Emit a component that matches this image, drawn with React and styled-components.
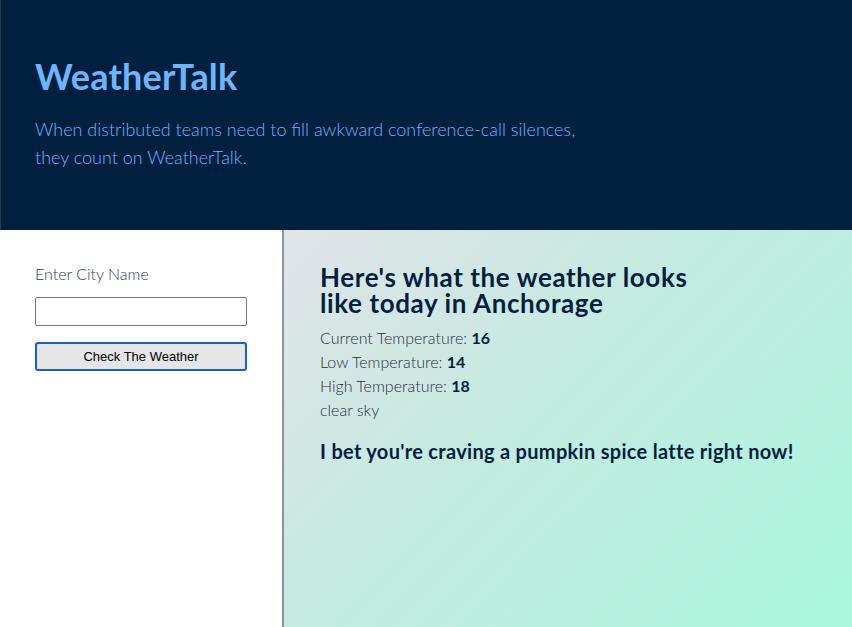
import React from "react";
import styled, { createGlobalStyle } from "styled-components";

const Global = createGlobalStyle`
  html, body { margin: 0; padding: 0; height: 100%; }
  body { font-family: Lato, "Open Sans", sans-serif; }
  #root { height: 100%; }
`;

const Page = styled.div`
  display: flex;
  flex-direction: column;
  min-height: 100vh;
`;

const Header = styled.header`
  background: #012040;
  height: 230px;
  box-sizing: border-box;
  padding: 56px 34px 0;
  border-left: 1px solid #1d3955;
`;

const Title = styled.h1`
  margin: 0;
  color: #6cb6ff;
  font-family: Lato, sans-serif;
  font-weight: 700;
  font-size: 36px;
  line-height: 40px;
  letter-spacing: 0.2px;
`;

const Tagline = styled.p`
  margin: 19px 0 0;
  color: #6cb6ff;
  font-family: Lato, sans-serif;
  font-weight: 300;
  font-size: 18px;
  line-height: 28px;
  max-width: 560px;
`;

const Main = styled.main`
  flex: 1;
  display: grid;
  grid-template-columns: 284px 1fr;
`;

const Sidebar = styled.aside`
  background: #fff;
  border-right: 2px solid #8792a2;
  padding: 34px 35px;
  display: flex;
  flex-direction: column;
  align-items: flex-start;
`;

const Label = styled.label`
  font-family: Lato, sans-serif;
  font-weight: 300;
  font-size: 16px;
  color: #2f3b4b;
  line-height: 20px;
`;

const Input = styled.input`
  margin-top: 13px;
  width: 212px;
  height: 29px;
  box-sizing: border-box;
  border: 1px solid #767676;
  border-radius: 2px;
  padding: 2px 6px;
  font-size: 13px;
`;

const Button = styled.button`
  margin-top: 16px;
  width: 212px;
  height: 29px;
  box-sizing: border-box;
  background: #e5e5e5;
  border: 2px solid #1a5fd0;
  border-radius: 3px;
  font-family: "Liberation Sans", Arial, sans-serif;
  font-size: 13px;
  color: #000;
  padding: 0;
`;

const Result = styled.section`
  background: linear-gradient(135deg, #e1e3e8 0%, #c3ebe0 45%, #a9f6dc 100%);
  padding: 34px 36px;
  color: #001f3f;
`;

const Heading = styled.h2`
  margin: 0;
  font-family: Lato, sans-serif;
  font-weight: 700;
  font-size: 26px;
  line-height: 26px;
  letter-spacing: 0.6px;
  max-width: 390px;
`;

const Stats = styled.div`
  margin-top: 10px;
  display: flex;
  flex-direction: column;
`;

const Stat = styled.div`
  font-family: Lato, sans-serif;
  font-weight: 300;
  font-size: 16px;
  line-height: 24px;
  color: #1f2e40;
  b {
    font-weight: 700;
    color: #001f3f;
  }
`;

const Quip = styled.p`
  margin: 17px 0 0;
  font-family: Lato, sans-serif;
  font-weight: 700;
  font-size: 20px;
  line-height: 24px;
  letter-spacing: 0.3px;
`;

export default function App() {
  return (
    <>
      <Global />
      <Page>
        <Header>
          <Title>WeatherTalk</Title>
          <Tagline>
            When distributed teams need to fill awkward conference-call silences,
            they count on WeatherTalk.
          </Tagline>
        </Header>
        <Main>
          <Sidebar>
            <Label htmlFor="city">Enter City Name</Label>
            <Input id="city" type="text" />
            <Button>Check The Weather</Button>
          </Sidebar>
          <Result>
            <Heading>Here's what the weather looks like today in Anchorage</Heading>
            <Stats>
              <Stat>Current Temperature: <b>16</b></Stat>
              <Stat>Low Temperature: <b>14</b></Stat>
              <Stat>High Temperature: <b>18</b></Stat>
              <Stat>clear sky</Stat>
            </Stats>
            <Quip>I bet you're craving a pumpkin spice latte right now!</Quip>
          </Result>
        </Main>
      </Page>
    </>
  );
}
